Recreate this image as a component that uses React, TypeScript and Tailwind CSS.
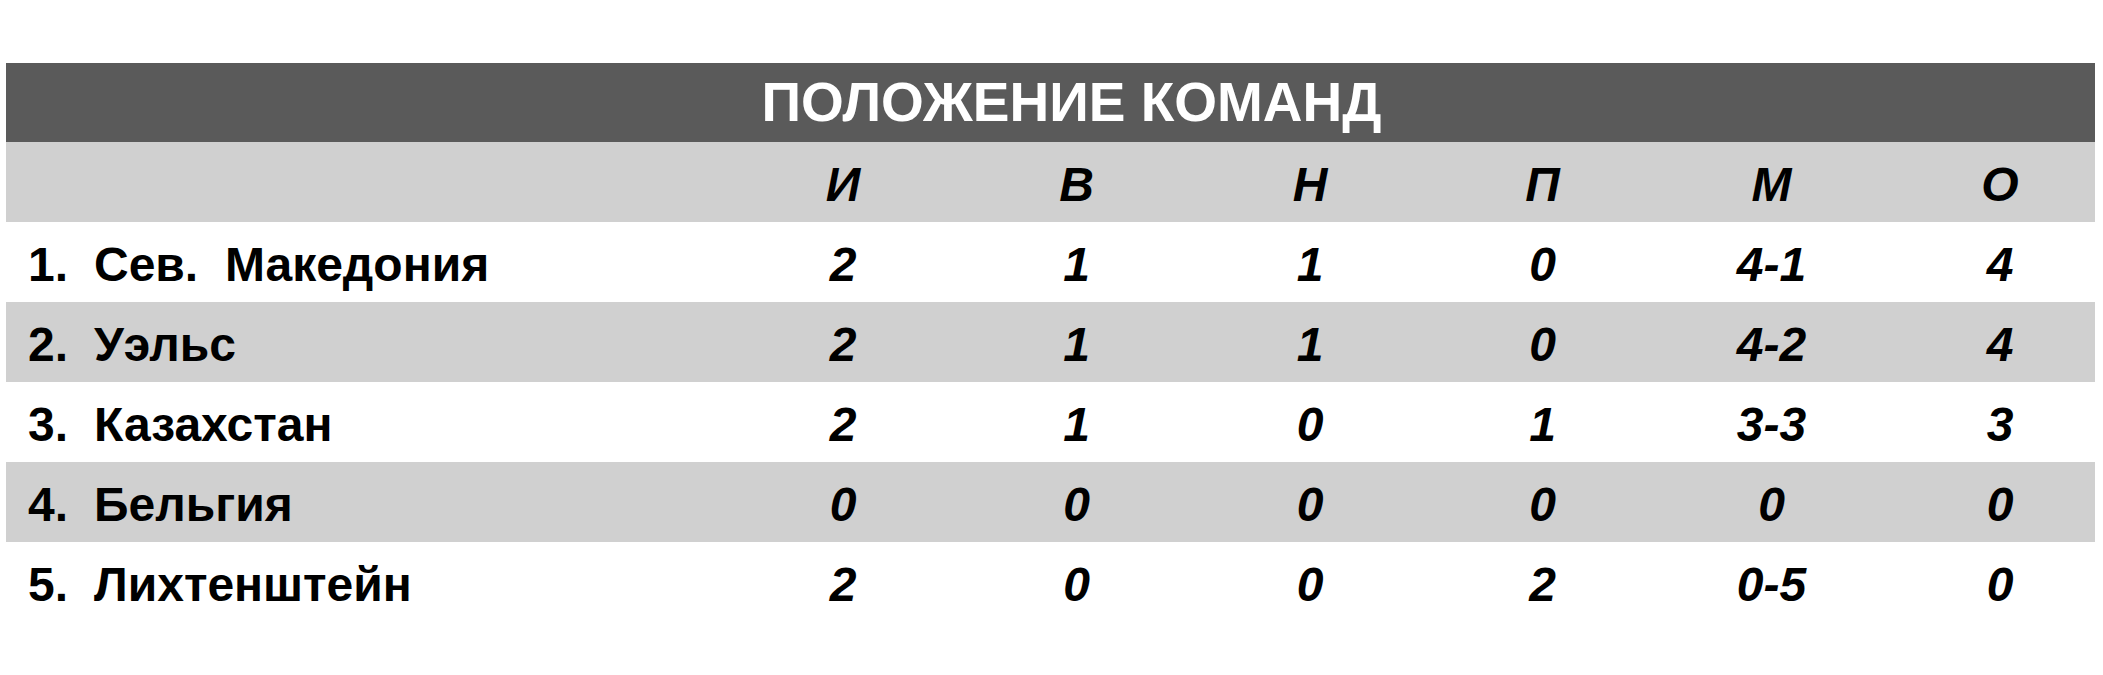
import React from 'react';

const teams = [
  { pos: '1.', name: 'Сев.  Македония', stats: ['2', '1', '1', '0', '4-1', '4'] },
  { pos: '2.', name: 'Уэльс', stats: ['2', '1', '1', '0', '4-2', '4'] },
  { pos: '3.', name: 'Казахстан', stats: ['2', '1', '0', '1', '3-3', '3'] },
  { pos: '4.', name: 'Бельгия', stats: ['0', '0', '0', '0', '0', '0'] },
  { pos: '5.', name: 'Лихтенштейн', stats: ['2', '0', '0', '2', '0-5', '0'] },
];

const columns = ['И', 'В', 'Н', 'П', 'М', 'О'];

const gridCols = 'grid grid-cols-[720px_234px_233px_234px_231px_227px_210px]';

const App = () => {
  return (
    <div className="w-[2103px] h-[675px] bg-white pt-[63px] pl-[6px] pr-[8px] font-['Liberation_Sans',Arial,sans-serif] text-black">
      {/* Title */}
      <div className="h-[79px] bg-[#5a5a5a] flex items-center justify-center pl-[42px]">
        <h1 className="text-[55px] leading-none font-bold text-white">ПОЛОЖЕНИЕ КОМАНД</h1>
      </div>

      {/* Column headers */}
      <div className={`${gridCols} h-[80px] bg-[#d0d0d0] items-center pt-[6px]`}>
        <div />
        {columns.map((col, i) => (
          <div
            key={col}
            className={`text-center text-[48px] leading-none font-bold italic ${i === 5 ? 'pl-[20px]' : ''}`}
          >
            {col}
          </div>
        ))}
      </div>

      {/* Rows */}
      {teams.map((team, index) => (
        <div
          key={team.pos}
          className={`${gridCols} h-[80px] items-center pt-[6px] ${index % 2 === 1 ? 'bg-[#d0d0d0]' : 'bg-white'}`}
        >
          <div className="flex items-baseline text-[48px] leading-none font-bold">
            <span className="w-[88px] pl-[22px]">{team.pos}</span>
            <span className="whitespace-pre">{team.name}</span>
          </div>
          {team.stats.map((value, i) => (
            <div
              key={i}
              className={`text-center text-[48px] leading-none font-bold italic ${i === 5 ? 'pl-[20px]' : ''}`}
            >
              {value}
            </div>
          ))}
        </div>
      ))}
    </div>
  );
};

export default App;
